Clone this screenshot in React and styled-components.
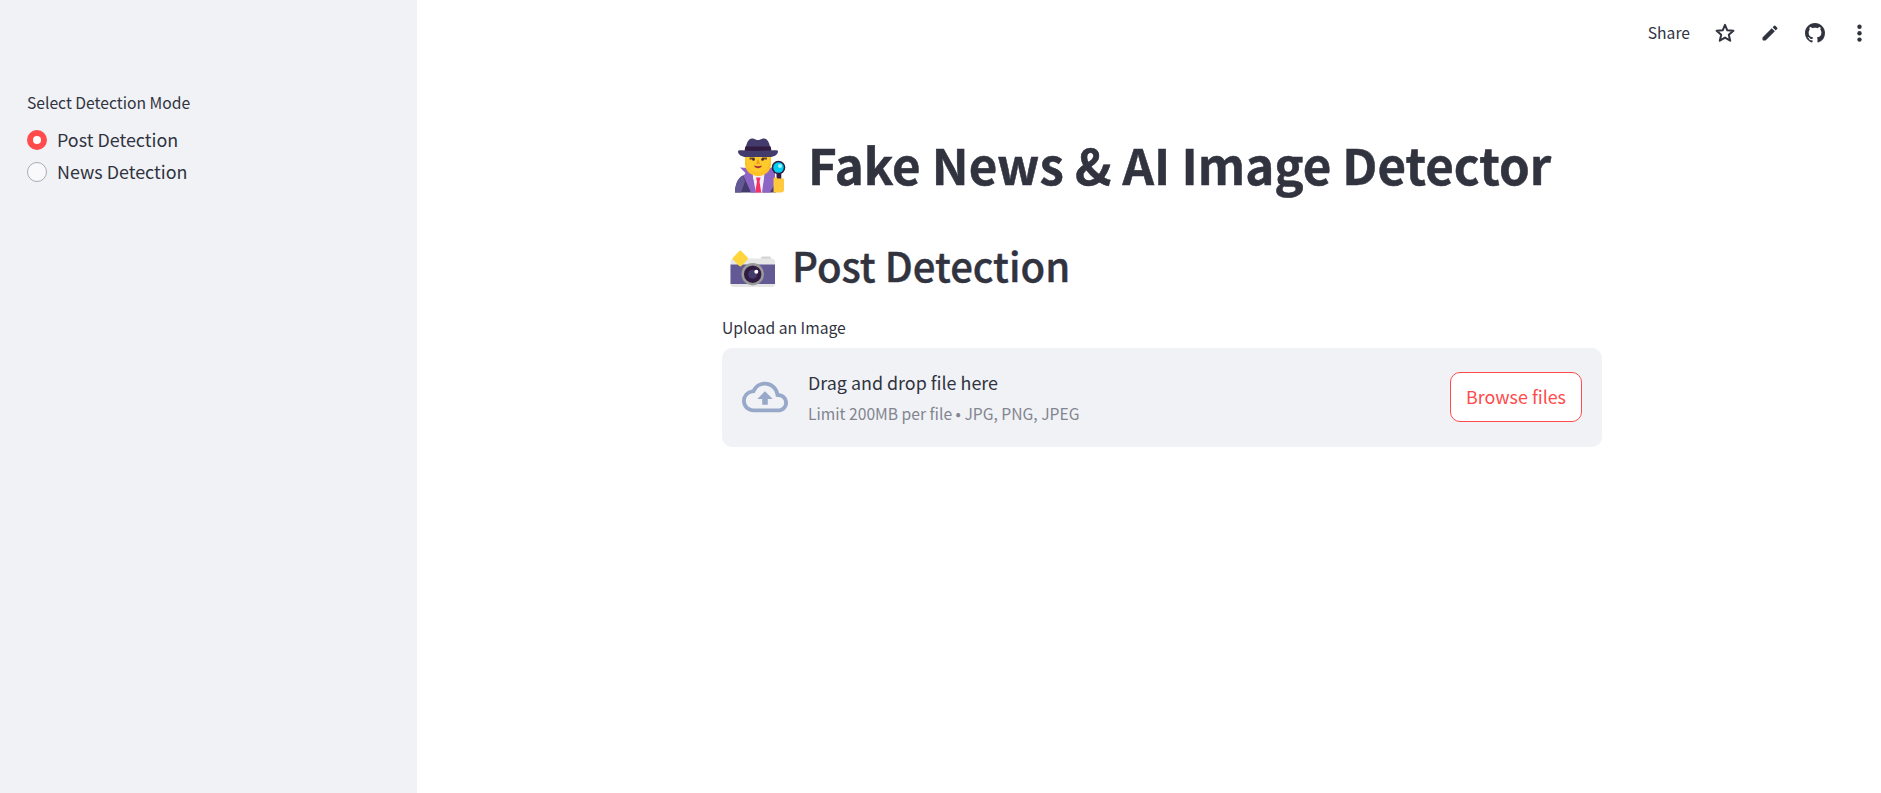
import { useState } from "react";
import styled, { createGlobalStyle } from "styled-components";

const GlobalStyle = createGlobalStyle`
  * {
    box-sizing: border-box;
  }
  body {
    margin: 0;
    background: #ffffff;
    color: #31333f;
    font-family: "Noto Sans CJK JP", "Noto Sans", sans-serif;
    font-size: 17.9px;
    overflow: hidden;
  }
`;

const modes = ["Post Detection", "News Detection"];

const StarIcon = () => (
  <svg width="24" height="24" viewBox="0 0 24 24" fill="none" stroke="currentColor" strokeWidth="2" strokeLinejoin="round">
    <path d="M12 3.800l2.300 5.500 6.100.5-4.600 4 1.400 5.900-5.200-3.100-5.200 3.100 1.400-5.900-4.600-4 6.100-.5z" />
  </svg>
);

const PencilIcon = () => (
  <svg width="20" height="20" viewBox="0 0 24 24" fill="currentColor">
    <path d="M3 17.8V20c0 .6.4 1 1 1h2.200c.3 0 .6-.1.8-.3L17.810 9.940l-3.750-3.750L3.300 17c-.2.200-.3.500-.3.800zM20.710 7.040a1 1 0 000-1.410l-2.340-2.340a1 1 0 00-1.410 0l-1.830 1.830 3.750 3.750 1.830-1.830z" />
  </svg>
);

const GithubIcon = () => (
  <svg width="20" height="20" viewBox="0 0 16 16" fill="currentColor">
    <path d="M8 0C3.58 0 0 3.58 0 8c0 3.54 2.29 6.53 5.47 7.59.4.07.55-.17.55-.38 0-.19-.01-.82-.01-1.49-2.01.37-2.53-.49-2.69-.94-.09-.23-.48-.94-.82-1.13-.28-.15-.68-.52-.01-.53.63-.01 1.08.58 1.23.82.72 1.21 1.87.87 2.33.66.07-.52.28-.87.51-1.07-1.78-.2-3.64-.89-3.64-3.95 0-.87.31-1.59.82-2.15-.08-.2-.36-1.02.08-2.12 0 0 .67-.21 2.2.82.64-.18 1.32-.27 2-.27s1.36.09 2 .27c1.53-1.04 2.2-.82 2.2-.82.44 1.1.16 1.92.08 2.12.51.56.82 1.27.82 2.15 0 3.07-1.87 3.75-3.65 3.95.29.25.54.73.54 1.48 0 1.07-.01 1.93-.01 2.2 0 .21.15.46.55.38A8.01 8.01 0 0016 8c0-4.42-3.58-8-8-8z" />
  </svg>
);

const MenuIcon = () => (
  <svg width="20" height="20" viewBox="0 0 20 20" fill="currentColor">
    <circle cx="9.500" cy="3.800" r="2.200" />
    <circle cx="9.500" cy="10.200" r="2.200" />
    <circle cx="9.500" cy="16.600" r="2.200" />
  </svg>
);

const CloudIcon = () => (
  <svg width="46" height="46" viewBox="0 0 24 24" fill="currentColor">
    <path d="M19.35 10.04A7.49 7.49 0 0012 4C9.11 4 6.6 5.64 5.35 8.04A5.994 5.994 0 000 14c0 3.31 2.69 6 6 6h13c2.76 0 5-2.24 5-5 0-2.64-2.05-4.78-4.65-4.96zM19 18H6c-2.21 0-4-1.79-4-4 0-2.05 1.53-3.76 3.56-3.97l1.07-.11.5-.95A5.469 5.469 0 0112 6c2.62 0 4.88 1.86 5.39 4.43l.3 1.5 1.53.11A2.98 2.98 0 0122 15c0 1.65-1.35 3-3 3zM8 13h2.55v3h2.9v-3H16l-4-4-4 4z" />
  </svg>
);

const Detective = () => (
  <svg width="52" height="56" viewBox="0 0 52 56">
    <path d="M1 55.500c0-8 3-15 8-17l8-2h16l8 3 1 16z" fill="#433b6b" />
    <path d="M1 55.500c0-8 3-15 8-17l2 6-4 11z" fill="#635994" />
    <path d="M18 35l6 4 7-4-2 20.500h-8z" fill="#f3eef8" />
    <path d="M22 40.500h4.500l-1 4 1.700 11h-6l1.800-11z" fill="#f8315f" />
    <path d="M6 30.500l8 .5 4 5 4 19.500h-5L9.500 39l2-3z" fill="#8d65c5" />
    <path d="M31 35l3-4 7-.5v16l-5 9h-8z" fill="#8d65c5" />
    <path d="M11 18h26v9c0 7-6 12-13 12s-13-5-13-12z" fill="#ffc125" />
    <path d="M13 18h22v8c0 5-4 9-11 9s-11-4-11-9z" fill="#ffca2c" />
    <path d="M15.500 20.500h5v2h-5zM28 20.500h5v2h-5z" fill="#6b4a2b" />
    <circle cx="19.500" cy="22.500" r="1.300" fill="#402a32" />
    <circle cx="28.500" cy="22.500" r="1.300" fill="#402a32" />
    <path d="M24 21.500l2 5.500h-4z" fill="#f59b20" />
    <path d="M20 28.500c3 1 5 1 8 0-1 3.500-7 3.500-8 0z" fill="#b02e3c" />
    <path d="M11 15c1-8 3-13.500 7-13.500 3 0 3 1.500 6 1.500s3-1.500 6-1.500c4 0 6 5.500 7 13.500z" fill="#433b6b" />
    <path d="M11.300 9.500h25.400l.8 4.500h-27z" fill="#321b41" />
    <path d="M4 14.500c0-1.500 2-1.500 4-1.200 10 .8 22 .8 32 0 2-.3 4-.3 4 1.200 0 3-4 5.500-8 5.500H12c-4 0-8-2.500-8-5.500z" fill="#433b6b" />
    <path d="M42.500 34h4.800v12h-4.800z" fill="#321b41" />
    <circle cx="44.500" cy="30.500" r="6.800" fill="#321b41" />
    <circle cx="44.500" cy="30.500" r="5.200" fill="#00d2f3" />
    <circle cx="46" cy="29" r="2" fill="#a7f1fb" />
    <path d="M39.500 42c0-2 3-2.500 4-.5h6.500v11c0 2-1 3-3 3h-7.500z" fill="#ffc83d" />
  </svg>
);

const Camera = () => (
  <svg width="46" height="38" viewBox="0 0 46 38">
    <rect x="31" y="6.500" width="10" height="4" rx="1.500" fill="#d3d3d3" />
    <rect x="0.500" y="8.500" width="44.500" height="28.500" rx="3.500" fill="#e6e6e6" />
    <path d="M.5 14.500H45V34H.5z" fill="#635994" />
    <circle cx="22.700" cy="24.200" r="11.200" fill="#9b9b9b" />
    <circle cx="22.700" cy="24.200" r="8.700" fill="#321b41" />
    <circle cx="22.700" cy="24.200" r="4.500" fill="#433b6b" />
    <circle cx="26.300" cy="21.800" r="2" fill="#fff" />
    <path d="M9 1.300c.8-1 1.700-1 2.500 0l6 6.200c.7.700.7 1.300 0 2l-6 6.200c-.8.900-1.700.9-2.500 0l-6-6.200c-.7-.7-.7-1.300 0-2z" fill="#ffd53e" />
  </svg>
);

const App = () => {
  const [mode, setMode] = useState(modes[0]);

  return (
    <>
      <GlobalStyle />
      <Page>
        <Sidebar>
          <Label>Select Detection Mode</Label>
          <RadioGroup>
            {modes.map((name) => (
              <RadioRow key={name} onClick={() => setMode(name)}>
                <Radio $checked={mode === name} />
                <RadioText>{name}</RadioText>
              </RadioRow>
            ))}
          </RadioGroup>
        </Sidebar>
        <Main>
          <Toolbar>
            <ShareButton>Share</ShareButton>
            <IconButton><StarIcon /></IconButton>
            <IconButton><PencilIcon /></IconButton>
            <IconButton><GithubIcon /></IconButton>
            <IconButton><MenuIcon /></IconButton>
          </Toolbar>
          <Content>
            <Title>
              <Detective />
              <span>Fake News &amp; AI Image Detector</span>
            </Title>
            <Subtitle>
              <Camera />
              <span>Post Detection</span>
            </Subtitle>
            <Label>Upload an Image</Label>
            <Dropzone>
              <CloudIcon />
              <Instructions>
                <DropText>Drag and drop file here</DropText>
                <LimitText>Limit 200MB per file • JPG, PNG, JPEG</LimitText>
              </Instructions>
              <BrowseButton>Browse files</BrowseButton>
            </Dropzone>
          </Content>
        </Main>
      </Page>
    </>
  );
};
export default App;

export const Page = styled.div`
  display: flex;
  height: 793px;
`;

export const Sidebar = styled.aside`
  width: 417px;
  padding: 89px 27px 0;
  background: #f0f2f6;
`;

export const Label = styled.div`
  height: 28px;
  font-size: 15.67px;
  line-height: 28px;
`;

export const RadioGroup = styled.div`
  display: flex;
  flex-direction: column;
  gap: 2px;
  margin-top: 8px;
`;

export const RadioRow = styled.div`
  display: flex;
  align-items: center;
  gap: 10px;
  height: 30px;
  cursor: pointer;
`;

export const Radio = styled.span`
  width: 20px;
  height: 20px;
  border: ${({ $checked }) => ($checked ? "6px solid #ff4b4b" : "1px solid #a9abb4")};
  border-radius: 50%;
  background: ${({ $checked }) => ($checked ? "#ffffff" : "#f9f9fb")};
`;

export const RadioText = styled.span`
  padding-bottom: 2px;
  line-height: 28px;
`;

export const Main = styled.main`
  flex: 1;
`;

export const Toolbar = styled.header`
  display: flex;
  justify-content: flex-end;
  align-items: center;
  height: 66px;
  padding-right: 9px;
`;

export const ShareButton = styled.button`
  margin-right: 20px;
  padding: 0;
  border: none;
  background: none;
  color: inherit;
  font-family: inherit;
  font-size: 15.67px;
  line-height: 28px;
`;

export const IconButton = styled.button`
  display: flex;
  justify-content: center;
  align-items: center;
  width: 25px;
  height: 25px;
  margin-left: 20px;
  padding: 0;
  border: none;
  background: none;
  color: inherit;

  ${ShareButton} + & {
    margin-left: 2px;
  }
`;

export const Content = styled.div`
  width: 880px;
  margin-left: 305px;
`;

export const Title = styled.h1`
  display: flex;
  align-items: center;
  height: 66px;
  margin: 66px 0 0;
  padding-left: 12px;
  font-size: 49.2px;
  font-weight: 700;
  line-height: 64px;
  white-space: nowrap;
  -webkit-text-stroke: 0.5px #31333f;

  span {
    margin-left: 22px;
    padding-bottom: 2px;
  }
`;

export const Subtitle = styled.h2`
  display: flex;
  align-items: center;
  height: 54px;
  margin: 41px 0 21px;
  padding-left: 8px;
  font-size: 40.1px;
  font-weight: 500;
  line-height: 52px;
  white-space: nowrap;
  -webkit-text-stroke: 0.4px #31333f;

  svg {
    margin-top: 6px;
  }

  span {
    margin-left: 16px;
    padding-bottom: 2px;
  }
`;

export const Dropzone = styled.section`
  display: flex;
  align-items: center;
  height: 99px;
  margin-top: 6px;
  padding: 0 20px 1px;
  border-radius: 10px;
  background: #f0f2f6;

  > svg {
    color: #98a8c8;
  }
`;

export const Instructions = styled.div`
  flex: 1;
  margin-left: 20px;
`;

export const DropText = styled.div`
  line-height: 32px;
`;

export const LimitText = styled.div`
  color: #83858f;
  font-size: 15.67px;
  line-height: 31px;
`;

export const BrowseButton = styled.button`
  width: 132px;
  height: 50px;
  padding: 0 0 2px;
  border: 1px solid #ff4b4b;
  border-radius: 10px;
  background: #ffffff;
  color: #ff4b4b;
  font-family: inherit;
  font-size: 17.9px;
`;
